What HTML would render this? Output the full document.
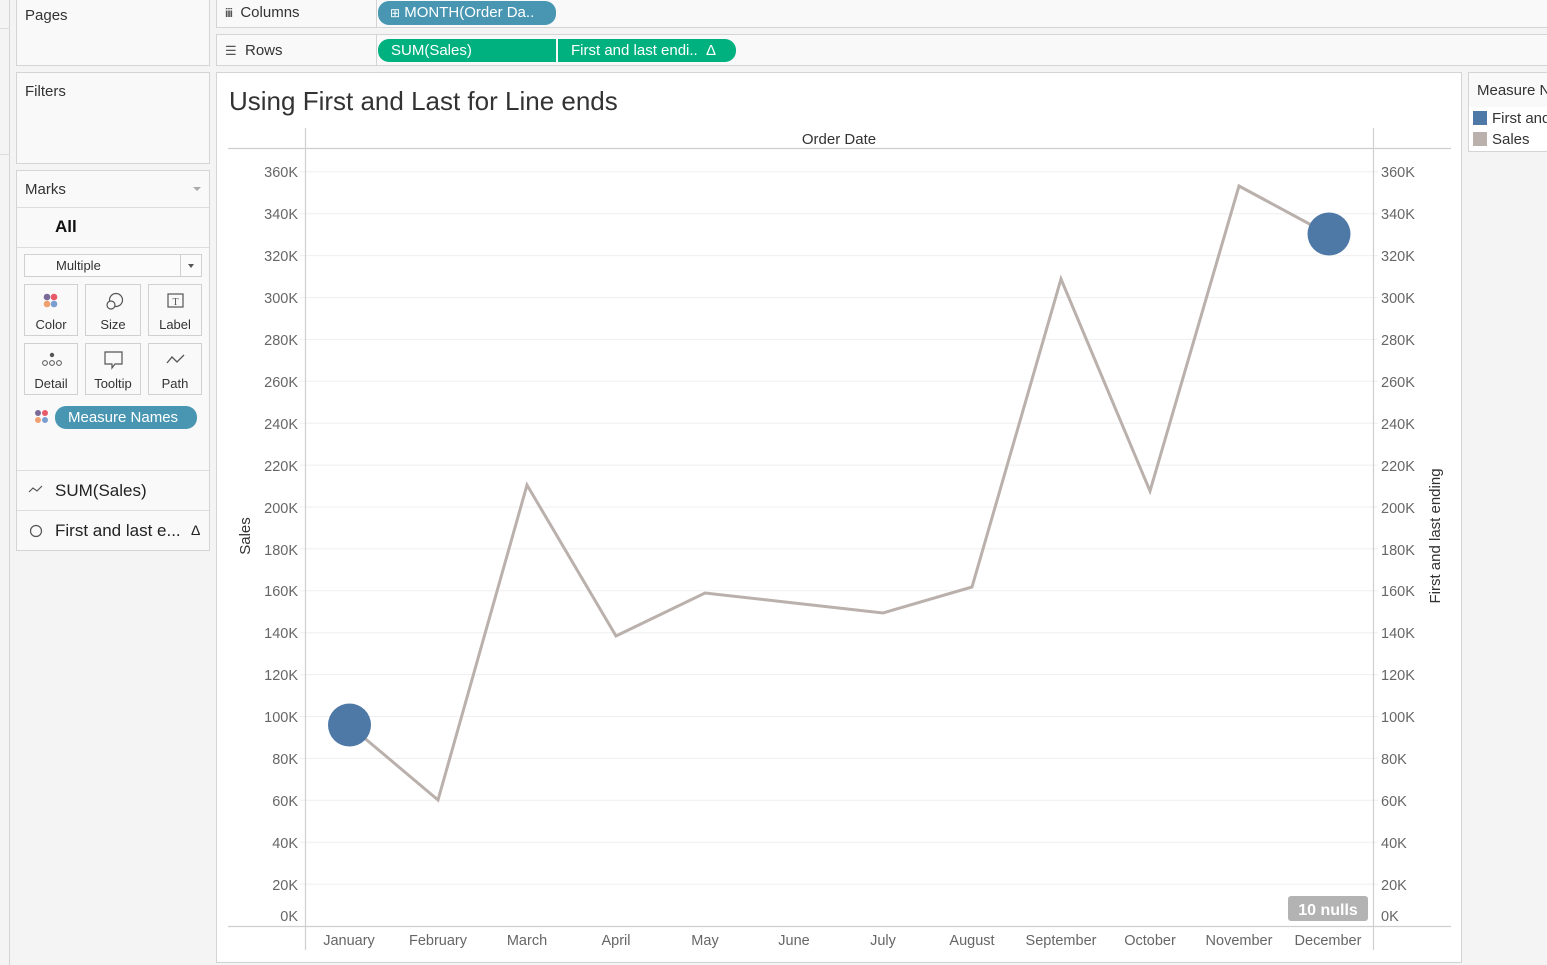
<!DOCTYPE html>
<html><head><meta charset="utf-8"><style>
*{margin:0;padding:0;box-sizing:border-box}
body{width:1547px;height:965px;background:#f4f4f4;font-family:"Liberation Sans",sans-serif;position:relative;overflow:hidden;color:#333}
.a{position:absolute}
.panel{position:absolute;background:#f9f9f9;border:1px solid #d4d4d4}
.lbl{font-size:15px;color:#333}
.pill{position:absolute;height:23px;border-radius:11px;color:#fff;font-size:15px;line-height:23px;padding-left:13px}
.card{position:absolute;width:54px;height:52px;border:1px solid #d0d0d0;background:#f9f9f9;font-size:13px;text-align:center}
.card span{position:absolute;left:0;right:0;bottom:3px}
</style></head><body>
<div class="a" style="left:0;top:0;width:10px;height:965px;border-right:1px solid #d4d4d4;background:#f4f4f4"></div>
<div class="a" style="left:0;top:28px;width:10px;height:1px;background:#ddd"></div>
<div class="a" style="left:0;top:154px;width:10px;height:1px;background:#ddd"></div>

<div class="panel" style="left:16px;top:-1px;width:194px;height:67px"><div class="lbl a" style="left:8px;top:7px">Pages</div></div>
<div class="panel" style="left:16px;top:72px;width:194px;height:92px"><div class="lbl a" style="left:8px;top:10px">Filters</div></div>
<div class="panel" style="left:16px;top:170px;width:194px;height:381px">
 <div class="lbl a" style="left:8px;top:10px">Marks</div>
 <div class="a" style="left:176px;top:16px;width:0;height:0;border-left:4px solid transparent;border-right:4px solid transparent;border-top:4px solid #aaa"></div>
 <div class="a" style="left:0;top:36px;width:192px;height:1px;background:#ddd"></div>
 <div class="a" style="left:38px;top:46px;font-size:17px;font-weight:bold;color:#111">All</div>
 <div class="a" style="left:0;top:76px;width:192px;height:1px;background:#ddd"></div>
 <div class="a" style="left:7px;top:83px;width:178px;height:23px;border:1px solid #d0d0d0;background:#fbfbfb;font-size:13px;line-height:21px;padding-left:31px">Multiple
  <div class="a" style="left:155px;top:0;width:1px;height:21px;background:#d0d0d0"></div>
  <div class="a" style="left:163px;top:9px;border-left:3px solid transparent;border-right:3px solid transparent;border-top:4px solid #555"></div></div>
 <div class="card" style="left:7px;top:113px"><svg class="a" style="left:17px;top:7px" width="20" height="20"><circle cx="5" cy="5" r="3.3" fill="#7a6a95"/><circle cx="12" cy="5" r="3.3" fill="#e85a6a"/><circle cx="5" cy="12" r="3.3" fill="#f0a070"/><circle cx="12" cy="12" r="3.3" fill="#7a9ed0"/></svg><span>Color</span></div>
 <div class="card" style="left:68px;top:113px;width:56px"><svg class="a" style="left:18px;top:6px" width="22" height="22"><circle cx="12" cy="9" r="6.5" fill="none" stroke="#555" stroke-width="1.2"/><circle cx="7" cy="14" r="4" fill="#f9f9f9" stroke="#555" stroke-width="1.2"/></svg><span>Size</span></div>
 <div class="card" style="left:131px;top:113px"><svg class="a" style="left:17px;top:7px" width="20" height="20"><rect x="2" y="2" width="15" height="13" fill="none" stroke="#555" stroke-width="1.2"/><text x="9.5" y="13" font-size="10" text-anchor="middle" fill="#555" font-family="Liberation Serif">T</text></svg><span>Label</span></div>
 <div class="card" style="left:7px;top:172px"><svg class="a" style="left:15px;top:7px" width="24" height="18"><circle cx="12" cy="4" r="2.2" fill="#555"/><circle cx="5" cy="12" r="2.4" fill="none" stroke="#555"/><circle cx="12" cy="12" r="2.4" fill="none" stroke="#555"/><circle cx="19" cy="12" r="2.4" fill="none" stroke="#555"/></svg><span>Detail</span></div>
 <div class="card" style="left:68px;top:172px;width:56px"><svg class="a" style="left:17px;top:6px" width="22" height="22"><path d="M2 2H19V14H12L9 18V14H2Z" fill="none" stroke="#555" stroke-width="1.2"/></svg><span>Tooltip</span></div>
 <div class="card" style="left:131px;top:172px"><svg class="a" style="left:17px;top:8px" width="20" height="16"><path d="M1 11L6 5L11 10L18 3" fill="none" stroke="#555" stroke-width="1.3"/></svg><span>Path</span></div>
 <svg class="a" style="left:17px;top:238px" width="16" height="16"><circle cx="4" cy="4" r="3" fill="#7a6a95"/><circle cx="11" cy="4" r="3" fill="#e85a6a"/><circle cx="4" cy="11" r="3" fill="#f0a070"/><circle cx="11" cy="11" r="3" fill="#7a9ed0"/></svg>
 <div class="pill" style="left:38px;top:235px;width:142px;background:#4996b2;font-size:15px">Measure Names</div>
 <div class="a" style="left:0;top:299px;width:192px;height:1px;background:#ddd"></div>
 <svg class="a" style="left:11px;top:312px" width="16" height="12"><path d="M1 9L5 5L9 8L14 3" fill="none" stroke="#555" stroke-width="1.2"/></svg>
 <div class="a" style="left:38px;top:310px;font-size:17px;color:#222">SUM(Sales)</div>
 <div class="a" style="left:0;top:339px;width:192px;height:1px;background:#ddd"></div>
 <svg class="a" style="left:12px;top:353px" width="14" height="14"><circle cx="7" cy="7" r="5.5" fill="none" stroke="#555" stroke-width="1.2"/></svg>
 <div class="a" style="left:38px;top:350px;font-size:17px;color:#222">First and last e...</div>
 <div class="a" style="left:174px;top:351px;font-size:14px;color:#222">Δ</div>
</div>

<div class="panel" style="left:216px;top:-1px;width:1335px;height:29px;background:#f9f9f9">
 <div class="a" style="left:159px;top:0;width:1px;height:28px;background:#d4d4d4"></div>
 <div class="lbl a" style="left:8px;top:4px"><b style="font-size:12px;color:#555;letter-spacing:-1px">iii</b>&nbsp; Columns</div>
</div>
<div class="pill" style="left:378px;top:1px;width:178px;height:24px;line-height:24px;background:#4996b2;padding-left:12px"><span style="font-size:12px">⊞</span> MONTH(Order Da..</div>
<div class="panel" style="left:216px;top:34px;width:1335px;height:32px;background:#f9f9f9">
 <div class="a" style="left:159px;top:0;width:1px;height:31px;background:#d4d4d4"></div>
 <div class="lbl a" style="left:8px;top:7px"><span style="font-size:13px;color:#555">☰</span>&nbsp; Rows</div>
</div>
<div class="pill" style="left:378px;top:39px;width:178px;background:#00b180;border-radius:11px 0 0 11px">SUM(Sales)</div>
<div class="pill" style="left:558px;top:39px;width:178px;background:#00b180;border-radius:0 11px 11px 0">First and last endi.. &nbsp;Δ</div>

<div class="a" style="left:216px;top:72px;width:1246px;height:891px;background:#fff;border:1px solid #d4d4d4"></div>
<div class="a" style="left:229px;top:86px;font-size:26px;color:#333;font-weight:300">Using First and Last for Line ends</div>

<div class="a" style="left:1468px;top:72px;width:85px;height:80px;background:#fff;border:1px solid #d4d4d4">
 <div class="a" style="left:0;top:0;width:85px;height:34px;background:#f9f9f9"></div>
 <div class="a" style="left:8px;top:9px;font-size:15px;white-space:nowrap">Measure N</div>
 <div class="a" style="left:4px;top:38px;width:14px;height:14px;background:#4e79a7"></div>
 <div class="a" style="left:23px;top:37px;font-size:15px;white-space:nowrap">First and</div>
 <div class="a" style="left:4px;top:59px;width:14px;height:14px;background:#bab0ac"></div>
 <div class="a" style="left:23px;top:58px;font-size:15px">Sales</div>
</div>

<svg class="a" style="left:0;top:0" width="1547" height="965" font-family="Liberation Sans, sans-serif">
 <g stroke="#efefef" stroke-width="1">
  <line x1="300" x2="1378" y1="884.1" y2="884.1"/><line x1="300" x2="1378" y1="842.2" y2="842.2"/><line x1="300" x2="1378" y1="800.3" y2="800.3"/><line x1="300" x2="1378" y1="758.4" y2="758.4"/><line x1="300" x2="1378" y1="716.5" y2="716.5"/><line x1="300" x2="1378" y1="674.6" y2="674.6"/><line x1="300" x2="1378" y1="632.7" y2="632.7"/><line x1="300" x2="1378" y1="590.8" y2="590.8"/><line x1="300" x2="1378" y1="548.9" y2="548.9"/><line x1="300" x2="1378" y1="507" y2="507"/><line x1="300" x2="1378" y1="465.1" y2="465.1"/><line x1="300" x2="1378" y1="423.2" y2="423.2"/><line x1="300" x2="1378" y1="381.3" y2="381.3"/><line x1="300" x2="1378" y1="339.4" y2="339.4"/><line x1="300" x2="1378" y1="297.5" y2="297.5"/><line x1="300" x2="1378" y1="255.6" y2="255.6"/><line x1="300" x2="1378" y1="213.7" y2="213.7"/><line x1="300" x2="1378" y1="171.8" y2="171.8"/>
 </g>
 <g stroke="#cfcfcf" stroke-width="1.2">
  <line x1="228" x2="1451" y1="148.5" y2="148.5"/>
  <line x1="228" x2="1451" y1="926.5" y2="926.5"/>
  <line x1="305.5" x2="305.5" y1="128" y2="950"/>
  <line x1="1373.5" x2="1373.5" y1="128" y2="950"/>
 </g>
 <text x="839" y="144" font-size="15" fill="#333" text-anchor="middle">Order Date</text>
 <g font-size="14.5" fill="#666" text-anchor="end">
  <text x="298" y="177">360K</text><text x="298" y="219">340K</text><text x="298" y="261">320K</text><text x="298" y="303">300K</text><text x="298" y="345">280K</text><text x="298" y="387">260K</text><text x="298" y="429">240K</text><text x="298" y="471">220K</text><text x="298" y="513">200K</text><text x="298" y="555">180K</text><text x="298" y="596">160K</text><text x="298" y="638">140K</text><text x="298" y="680">120K</text><text x="298" y="722">100K</text><text x="298" y="764">80K</text><text x="298" y="806">60K</text><text x="298" y="848">40K</text><text x="298" y="890">20K</text><text x="298" y="921">0K</text>
 </g>
 <g font-size="14.5" fill="#666">
  <text x="1381" y="177">360K</text><text x="1381" y="219">340K</text><text x="1381" y="261">320K</text><text x="1381" y="303">300K</text><text x="1381" y="345">280K</text><text x="1381" y="387">260K</text><text x="1381" y="429">240K</text><text x="1381" y="471">220K</text><text x="1381" y="513">200K</text><text x="1381" y="555">180K</text><text x="1381" y="596">160K</text><text x="1381" y="638">140K</text><text x="1381" y="680">120K</text><text x="1381" y="722">100K</text><text x="1381" y="764">80K</text><text x="1381" y="806">60K</text><text x="1381" y="848">40K</text><text x="1381" y="890">20K</text><text x="1381" y="921">0K</text>
 </g>
 <text transform="translate(250,536) rotate(-90)" font-size="15" fill="#333" text-anchor="middle">Sales</text>
 <text transform="translate(1440,536) rotate(-90)" font-size="15" fill="#333" text-anchor="middle">First and last ending</text>
 <g font-size="14.5" fill="#666" text-anchor="middle">
  <text x="349" y="945">January</text><text x="438" y="945">February</text><text x="527" y="945">March</text><text x="616" y="945">April</text><text x="705" y="945">May</text><text x="794" y="945">June</text><text x="883" y="945">July</text><text x="972" y="945">August</text><text x="1061" y="945">September</text><text x="1150" y="945">October</text><text x="1239" y="945">November</text><text x="1328" y="945">December</text>
 </g>
 <polyline points="349,725 438,800 527,485 616,636 705,593 794,603 883,613 972,587 1061,279 1150,491 1239,186 1328,234" fill="none" stroke="#bab0ac" stroke-width="3" stroke-linejoin="miter"/>
 <circle cx="349.5" cy="725" r="21.5" fill="#4e79a7"/>
 <circle cx="1329" cy="234" r="21.5" fill="#4e79a7"/>
 <rect x="1288" y="896" width="80" height="25" rx="3" fill="#b3b3b3"/>
 <text x="1328" y="915" font-size="16" font-weight="bold" fill="#fff" text-anchor="middle">10 nulls</text>
</svg>
</body></html>
